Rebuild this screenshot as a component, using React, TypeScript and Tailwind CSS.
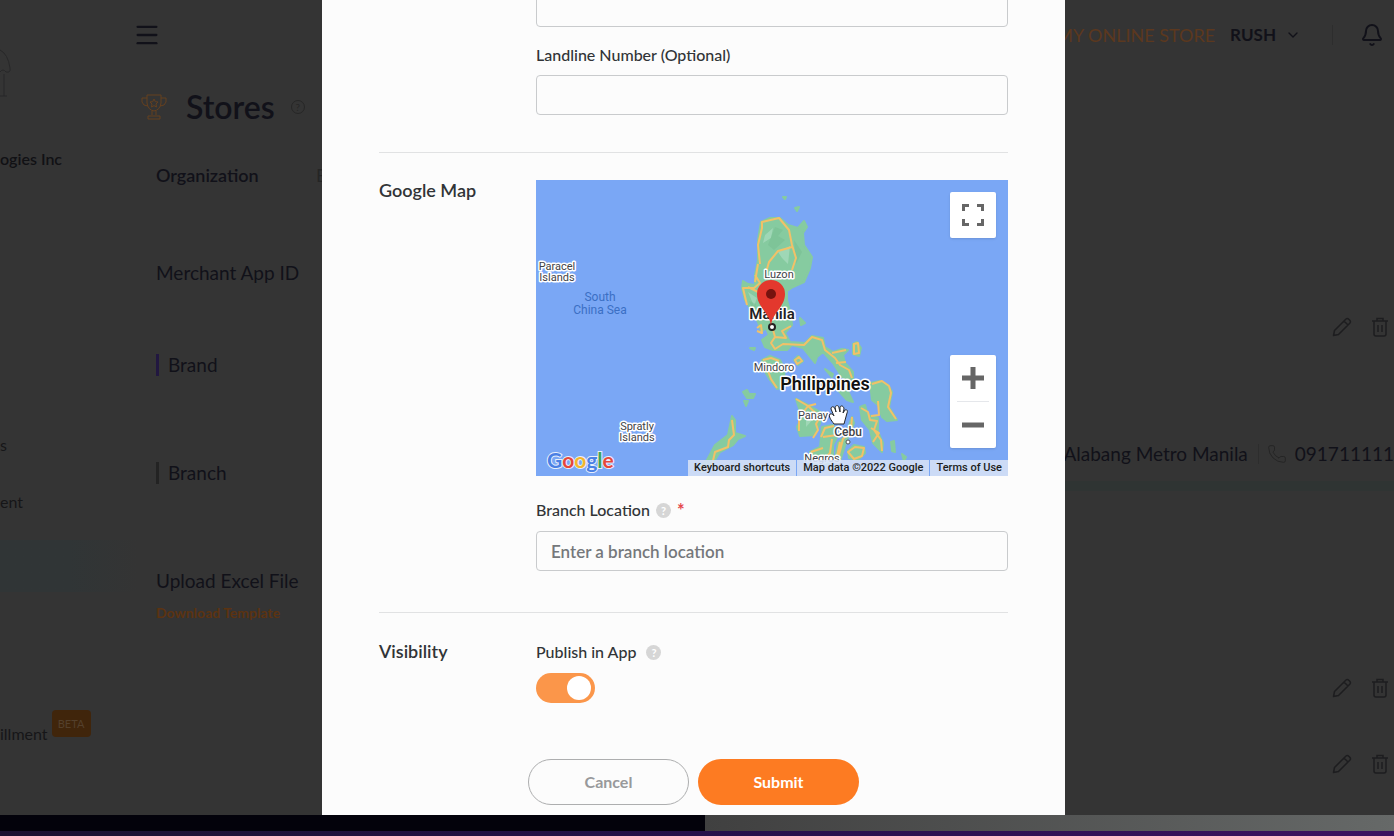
import { useState } from "react";
import { Bell, ChevronDown, Menu, Phone } from "lucide-react";

const landmasses = [
  // Luzon
  "M225 42 L234 38 L244 38 L252 45 L262 48 L268 41 L271 47 L267 53 L268 65 L276 77 L274 88 L268 102 L257 107 L251 111 L251 120 L255 135 L256 145 L249 153 L254 162 L269 163 L276 156 L287 158 L289 167 L297 172 L306 169 L312 170 L307 175 L309 183 L317 192 L317 200 L306 197 L297 183 L287 172 L281 177 L279 183 L267 168 L256 165 L251 170 L237 170 L229 167 L226 160 L233 155 L230 148 L225 152 L222 142 L214 128 L209 120 L206 108 L207 101 L212 104 L219 105 L219 95 L222 80 L222 60 Z",
  // Catanduanes
  "M317 164 L321 162 L325 168 L323 176 L317 174 Z",
  // Mindoro
  "M226 180 L234 176 L244 180 L249 190 L246 207 L241 209 L234 200 L228 190 Z",
  "M258 180 L262 176 L267 181 L262 185 Z",
  // Masbate
  "M300 208 L310 207 L317 222 L311 220 Z",
  // Samar and Leyte
  "M334 203 L344 201 L352 205 L356 212 L353 227 L361 240 L351 241 L346 237 L342 225 L336 220 Z",
  "M324 227 L329 225 L332 235 L342 238 L342 252 L347 263 L346 272 L337 263 L334 250 L326 240 Z",
  // Panay
  "M260 219 L272 225 L286 233 L284 243 L279 255 L264 256 L261 247 L266 237 Z",
  // Negros
  "M286 247 L297 245 L302 255 L297 265 L297 277 L292 284 L274 284 L274 272 L284 267 Z",
  // Cebu and Bohol
  "M316 237 L318 243 L312 257 L304 281 L299 279 L302 263 L309 256 Z",
  "M312 271 L318 265 L328 267 L329 273 L322 280 L313 278 Z",
  // Palawan
  "M196 236 L199 240 L199 253 L209 256 L202 259 L197 265 L184 272 L177 283 L166 292 L162 288 L171 280 L179 265 L192 255 Z",
  "M207 212 L211 210 L213 214 L219 214 L217 218 L211 218 Z",
  "M208 221 L212 221 L210 226 Z",
  // small islands
  "M247 17 L250 17 L249 19 Z",
  "M259 28 L263 27 L261 31 Z",
  "M214 168 L219 168 L218 170 Z",
  "M264 138 L269 143 L265 145 Z",
  "M289 189 L297 194 L296 197 Z",
  "M355 262 L358 261 L359 272 L356 271 Z",
  "M366 274 L370 277 L368 281 Z",
];

const roads = [
  "M224 84 L222 65 L226 48 L226 42 L243 38 L253 50 L256 65 L260 78 L256 90 M219 102 L222 84 M256 67 L242 71 L233 82 L229 96 M219 95 L224 103 L218 108 L207 108 L211 125 M222 112 L212 107 M236 146 L239 157 L250 158 L246 151 L255 146 M239 157 L235 163 L239 169 L247 164 L268 165 L276 157 L286 160 L289 170 L299 178 L304 185 L313 190 L316 198 M300 183 L310 182 M296 173 L310 170 M221 148 L225 145 L226 153 L221 151",
  "M318 164 L322 163 L323 173 L318 174 Z",
  "M227 180 L235 178 L243 181 M229 183 L235 199 L241 208",
  "M336 204 L346 201 L353 206 L355 213 L352 227 L360 239 M342 221 L343 235 L335 236 M327 205 L335 203",
  "M325 228 L332 232 L334 240 L341 241 L338 250 L345 260 L346 271 M335 248 L343 253 L337 262",
  "M260 219 L272 226 L284 237 L280 244 L282 250 L277 258 M263 251 L263 238 L272 226 L280 224",
  "M285 257 L289 248 L298 246 M287 257 L301 255 M296 259 L294 273 L286 282 M275 272 L287 268",
  "M316 237 L315 250 L307 259 L303 275 M304 262 L301 276",
  "M312 272 L319 267 L328 268 L326 276 L318 279 Z",
  "M259 180 L263 177 L266 181 L261 184 Z",
  "M196 240 L198 255 L193 260 L192 267 L179 272 L176 285 L164 291",
];

const MapCanvas = () => (
  <svg viewBox="0 0 472 296" className="block h-auto w-full" role="img" aria-label="Map">
    <rect width="472" height="296" fill="#7aa7f5" />
    <g fill="#86cba0" stroke="#86cba0" strokeWidth="2" strokeLinejoin="round">
      {landmasses.map((d) => (
        <path key={d} d={d} />
      ))}
    </g>
    <g fill="#a9dcbf" opacity="0.7">
      <path d="M229 55 L237 48 L235 58 L227 63 Z M242 72 L254 66 L252 84 L246 78 Z M212 112 L221 118 L218 126 Z M270 232 L279 237 L270 247 Z" />
    </g>
    <g fill="#72b98c" opacity="0.4">
      <path d="M239 47 L247 50 L242 56 L249 60 L238 70 L232 65 Z M258 60 L266 72 L260 84 Z M213 121 L220 124 L218 133 Z" />
    </g>
    <g fill="none" stroke="#f2c168" strokeWidth="2" strokeLinejoin="round">
      {roads.map((d) => (
        <path key={d} d={d} />
      ))}
    </g>
    <g
      fill="#3f4347"
      stroke="#ffffff"
      strokeWidth="3"
      strokeLinejoin="round"
      paintOrder="stroke"
      textAnchor="middle"
      fontFamily="Roboto, sans-serif"
      fontSize="11"
    >
      <text x="21" y="90">Paracel</text>
      <text x="21" y="101">Islands</text>
      <text x="101" y="250">Spratly</text>
      <text x="101" y="261">Islands</text>
      <text x="243" y="98">Luzon</text>
      <text x="238" y="191">Mindoro</text>
      <text x="277" y="239">Panay</text>
      <text x="286" y="282">Negros</text>
      <text x="312" y="256" fontSize="12" fontWeight="500">Cebu</text>
      <text x="236" y="139" fontSize="15" fontWeight="600" fill="#1f2124">Manila</text>
      <text x="289" y="210" fontSize="18" fontWeight="600" fill="#111111">Philippines</text>
    </g>
    <g fill="#3b6fc4" textAnchor="middle" fontFamily="Roboto, sans-serif" fontSize="12">
      <text x="64" y="121">South</text>
      <text x="64" y="134">China Sea</text>
    </g>
    <circle cx="236" cy="147" r="3" fill="#ffffff" stroke="#222222" strokeWidth="2" />
    <circle cx="312" cy="262" r="2" fill="#ffffff" stroke="#555555" />
    <path
      d="M235 146 C234 133 221 127 221 114 A14 14 0 0 1 249 114 C249 127 236 133 235 146 Z"
      fill="#e3382d"
    />
    <circle cx="235" cy="114" r="5" fill="#76130f" />
    <path
      d="M298 244 C295 240 292 236 294 234 C296 233 298 236 298 236 L295 229 C295 226 298 226 299 229 L300 232 L299 227 C300 225 303 225 303 228 L304 232 L304 227 C305 225 308 226 308 229 L307 233 L309 230 C311 229 312 231 311 233 L308 244 Z"
      fill="#ffffff"
      stroke="#26282b"
      strokeLinejoin="round"
    />
    <text
      x="11"
      y="288"
      fontFamily="Lato, sans-serif"
      fontSize="21"
      fontWeight="700"
      stroke="#e8effc"
      strokeWidth="2"
      paintOrder="stroke"
    >
      <tspan fill="#4a80e4">G</tspan>
      <tspan fill="#e5473b">o</tspan>
      <tspan fill="#f3b62c">o</tspan>
      <tspan fill="#4a80e4">g</tspan>
      <tspan fill="#3da35a">l</tspan>
      <tspan fill="#e5473b">e</tspan>
    </text>
  </svg>
);

const GoogleMap = () => (
  <div className="relative font-[Roboto,sans-serif]">
    <MapCanvas />
    <button
      type="button"
      aria-label="Toggle fullscreen view"
      className="absolute top-3 right-3 flex size-[46px] items-center justify-center rounded-xs bg-white shadow"
    >
      <svg viewBox="0 0 22 22" className="size-[22px]" fill="none" stroke="#666666" strokeWidth="3">
        <path d="M1.500 7V1.500H7 M15 1.500H20.500V7 M20.500 15V20.500H15 M7 20.500H1.500V15" />
      </svg>
    </button>
    <div className="absolute right-3 bottom-7 flex w-[46px] flex-col items-center rounded-xs bg-white shadow">
      <button type="button" aria-label="Zoom in" className="flex h-[46px] w-full items-center justify-center">
        <svg viewBox="0 0 22 22" className="size-[22px]" fill="none" stroke="#666666" strokeWidth="5">
          <path d="M0 11H22 M11 0V22" />
        </svg>
      </button>
      <div className="h-px w-8 bg-gray-200" />
      <button type="button" aria-label="Zoom out" className="flex h-[46px] w-full items-center justify-center">
        <svg viewBox="0 0 22 22" className="size-[22px]" fill="none" stroke="#666666" strokeWidth="5">
          <path d="M0 11H22" />
        </svg>
      </button>
    </div>
    <div className="absolute right-0 bottom-0 flex h-4 text-[11px] leading-4 font-medium whitespace-nowrap text-[#1c1e21]">
      <button type="button" className="bg-[#d5e1f6]/90 px-[6px]">Keyboard shortcuts</button>
      <span className="ml-px bg-[#d5e1f6]/90 px-[6px]">Map data ©2022 Google</span>
      <a href="#terms" className="ml-px bg-[#d5e1f6]/90 px-[6px]">Terms of Use</a>
    </div>
  </div>
);

const HelpIcon = () => (
  <span className="flex size-[15px] items-center justify-center rounded-full bg-[#d6d6d6] text-[11px] leading-none font-bold text-white">
    ?
  </span>
);

const inputClass =
  "block h-10 w-full rounded-sm border border-[#c9cbcd] bg-transparent px-[14px] text-[17px] font-semibold text-[#3c3f42] outline-none placeholder:text-[#75787b]";

const StoreModal = () => {
  const [published, setPublished] = useState(true);

  return (
    <form
      className="w-full max-w-[743px] overflow-hidden bg-[#fcfcfc] px-[57px] text-[#313437]"
      onSubmit={(e) => e.preventDefault()}
    >
      <div className="grid grid-cols-[157px_1fr] border-b border-[#e1e2e3] pb-[37px]">
        <div className="col-start-2">
          <input aria-label="Mobile Number" className={`${inputClass} -mt-[13px]`} />
          <label htmlFor="landline" className="mt-[17px] mb-[9px] block text-[16px] leading-[22px] font-medium">
            Landline Number (Optional)
          </label>
          <input id="landline" className={inputClass} />
        </div>
      </div>

      <div className="grid grid-cols-[157px_1fr] border-b border-[#e1e2e3] pt-[27px] pb-[41px]">
        <h2 className="text-[18px] leading-5 font-semibold">Google Map</h2>
        <div>
          <GoogleMap />
          <div className="mt-[23px] mb-[10px] flex items-center gap-[6px]">
            <label htmlFor="location" className="text-[16px] leading-[22px] font-medium">
              Branch Location
            </label>
            <HelpIcon />
            <span className="text-[18px] leading-[22px] font-bold text-[#e5484d]">*</span>
          </div>
          <input id="location" placeholder="Enter a branch location" className={inputClass} />
        </div>
      </div>

      <div className="grid grid-cols-[157px_1fr] pt-7">
        <h2 className="text-[18px] leading-5 font-semibold">Visibility</h2>
        <div>
          <div className="mb-[10px] flex items-center gap-[10px]">
            <label htmlFor="publish" className="text-[16px] leading-[22px] font-medium">
              Publish in App
            </label>
            <HelpIcon />
          </div>
          <input
            id="publish"
            type="checkbox"
            role="switch"
            checked={published}
            onChange={(e) => setPublished(e.target.checked)}
            className="flex h-[30px] w-[59px] cursor-pointer appearance-none items-center rounded-full bg-gray-300 px-1 before:size-6 before:rounded-full before:bg-white before:content-[''] checked:justify-end checked:bg-[#fb964a]"
          />
        </div>
      </div>

      <div className="flex justify-center gap-[9px] pt-14 pb-[10px] text-[16px]">
        <button type="button" className="h-[46px] w-[161px] rounded-full border border-[#adaeaf] font-bold text-[#98999b]">
          Cancel
        </button>
        <button type="submit" className="h-[46px] w-[161px] rounded-full bg-[#fd7b22] font-bold text-white">
          Submit
        </button>
      </div>
    </form>
  );
};

const RowActions = () => (
  <div className="flex gap-5 text-[#1d1d1f]">
    <button type="button" aria-label="Edit">
      <svg viewBox="0 0 20 20" className="size-5" fill="none" stroke="currentColor" strokeWidth="1.500" strokeLinejoin="round">
        <path d="M1.500 18.500 L2.500 13.500 L14 2 Q15.500 1 17 2.500 L18 3.500 Q19 5 18 6 L6.500 17.500 Z M12 4 L16 8" />
      </svg>
    </button>
    <button type="button" aria-label="Delete">
      <svg viewBox="0 0 16 20" className="h-5 w-4" fill="none" stroke="currentColor" strokeWidth="1.500">
        <path d="M0 4H16 M5 4V1.500H11V4 M2 4V17Q2 19 4 19H12Q14 19 14 17V4 M6 8V15 M10 8V15" />
      </svg>
    </button>
  </div>
);

const TrophyIcon = () => (
  <svg viewBox="0 0 26 26" className="size-[26px] text-[#65401f]" fill="none" stroke="currentColor" strokeLinejoin="round">
    <path d="M6 1H20V9Q19 16 13 17Q7 16 6 9Z M6 4H1V8Q2 12 7 12 M20 4H25V8Q24 12 19 12 M11 17V21 M15 17V21 M7 25V22H19V25Z" />
    <path d="M13 5L14.300 7.700L17 8L15 10L15.500 13L13 11.600L10.500 13L11 10L9 8L11.700 7.700Z" />
  </svg>
);

const Sidebar = () => (
  <aside className="w-[137px] shrink-0 text-[16px] leading-5 text-[#161618]">
    <svg viewBox="0 0 14 50" className="mt-12 h-[50px] w-[14px]" fill="none" stroke="#272728">
      <path d="M0 2 Q8 6 10 20 Q11 25 6 24 Q3 20 0 24 M4 26V48 M0 48H7" />
    </svg>
    <p className="mt-[51px] font-semibold text-[#111114]">ogies Inc</p>
    <nav className="flex flex-col">
      <a href="#rewards" className="mt-[266px]">s</a>
      <a href="#management" className="mt-[37px]">ent</a>
      <div className="mt-7 h-[52px] bg-linear-to-r from-[#303536] via-[#303536] to-[#343434]" />
      <div className="mt-[118px] flex gap-1">
        <a href="#fulfillment" className="pt-[14px]">illment</a>
        <span className="flex h-[27px] w-[39px] items-center justify-center rounded-sm bg-[#40250b] text-[11px] text-[#54402c]">
          BETA
        </span>
      </div>
    </nav>
  </aside>
);

const StoresPage = () => (
  <div className="flex min-w-0 flex-1 flex-col text-[#111119]">
    <header className="flex h-[70px] items-center justify-between pr-[10px]">
      <button type="button" aria-label="Menu">
        <Menu className="-ml-1 size-7" strokeWidth={2} />
      </button>
      <div className="flex items-center">
        <a href="#store" className="text-[18px] text-[#5c381e]">MY ONLINE STORE</a>
        <button type="button" className="ml-[15px] flex items-center gap-[9px] text-[17px] font-bold">
          RUSH
          <ChevronDown className="size-4" strokeWidth={2} />
        </button>
        <div className="mr-[27px] ml-[31px] h-5 w-px bg-[#2d2d2d]" />
        <button type="button" aria-label="Notifications">
          <Bell className="size-6" strokeWidth={2} />
        </button>
      </div>
    </header>
    <div className="flex justify-between">
      <div className="pl-[19px]">
        <div className="-ml-[15px] mt-4 flex h-[42px] items-center">
          <TrophyIcon />
          <h1 className="ml-[19px] text-[32px] leading-[42px] font-semibold">Stores</h1>
          <span className="ml-4 flex size-[14px] items-center justify-center rounded-full border border-[#262626] text-[10px] text-[#262626]">
            ?
          </span>
        </div>
        <div className="mt-[35px] flex text-[18px] leading-6">
          <span className="w-40 font-semibold">Organization</span>
          <span className="text-[#252525]">E</span>
        </div>
        <p className="mt-[74px] text-[19px] leading-6">Merchant App ID</p>
        <p className="mt-[68px] flex items-center gap-[9px] text-[19px] leading-6">
          <span className="h-[22px] w-[3px] bg-[#211740]" />
          Brand
        </p>
        <p className="mt-[84px] flex items-center gap-[9px] text-[19px] leading-6">
          <span className="h-[22px] w-[3px] bg-[#232323]" />
          Branch
        </p>
        <p className="mt-[84px] text-[19px] leading-6">Upload Excel File</p>
        <a href="#template" className="mt-[10px] block text-[14px] leading-5 font-bold text-[#5c3311]">
          Download Template
        </a>
      </div>
      <div className="flex flex-col items-end">
        <div className="mt-[247px] pr-[6px]">
          <RowActions />
        </div>
        <p className="mt-[105px] flex items-center text-[19px] leading-6 whitespace-nowrap">
          Alabang Metro Manila
          <span className="mr-2 ml-[10px] h-5 w-px bg-[#2d2d2d]" />
          <Phone className="mr-2 size-5 text-[#222222]" strokeWidth={1} />
          091711111
        </p>
        <div className="mt-[15px] h-[10px] w-[330px] bg-[#2f3433]" />
        <div className="mt-[187px] pr-[6px]">
          <RowActions />
        </div>
        <div className="mt-14 pr-[6px]">
          <RowActions />
        </div>
      </div>
    </div>
  </div>
);

const App = () => (
  <div className="min-h-screen overflow-hidden bg-[#03020b] font-[Lato,sans-serif]">
    <div className="grid bg-[#343434]">
      <div className="col-start-1 row-start-1 flex min-w-0">
        <Sidebar />
        <StoresPage />
      </div>
      <div className="z-10 col-start-1 row-start-1 flex justify-center pr-[7px]">
        <StoreModal />
      </div>
    </div>
    <div className="flex h-4">
      <div className="w-[705px] bg-[#03020b]" />
      <div className="flex-1 bg-linear-to-r from-[#404040] to-[#666968]" />
    </div>
    <div className="h-[5px] bg-linear-to-r from-[#1b1230] via-[#24104a] to-[#3d1260]" />
  </div>
);

export default App;
